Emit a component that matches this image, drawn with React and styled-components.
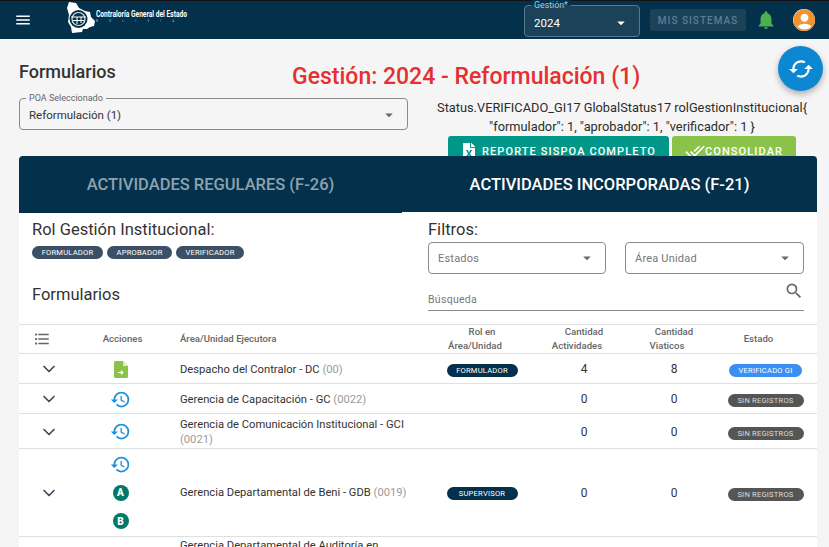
import React from "react";
import styled, { createGlobalStyle } from "styled-components";
import {
  MdMenu,
  MdNotifications,
  MdAccountCircle,
  MdArrowDropDown,
  MdSearch,
  MdDoneAll,
  MdHistory,
  MdFormatListBulleted,
  MdCached,
} from "react-icons/md";
import { FaFileExcel } from "react-icons/fa";
import { ChevronDown } from "lucide-react";

const GlobalStyle = createGlobalStyle`
  html, body {
    margin: 0;
    padding: 0;
    height: 100%;
    overflow: hidden;
    background: #f5f5f5;
    font-family: Roboto, "Liberation Sans", sans-serif;
    color: #212121;
  }
  * { box-sizing: border-box; }
`;

const Page = styled.div`
  position: relative;
  width: 829px;
  height: 547px;
  overflow: hidden;
`;

const AppBar = styled.header`
  height: 39px;
  background: #03304a;
  border-top: 1px solid #111;
  display: flex;
  align-items: center;
  padding-left: 14px;
  color: #fff;
`;

const Brand = styled.div`
  display: flex;
  align-items: center;
  margin-left: 34px;
  margin-top: -5px;
`;

const BrandText = styled.div`
  display: flex;
  flex-direction: column;
  width: 92px;
  margin-top: -2px;
`;

const BrandName = styled.span`
  font-size: 9px;
  line-height: 9px;
  font-weight: 700;
  white-space: nowrap;
  transform: scaleX(0.74);
  transform-origin: left;
`;

const BrandCountry = styled.span`
  font-size: 3px;
  line-height: 4px;
  letter-spacing: 11.2px;
  color: #a9bac4;
  white-space: nowrap;
`;

const BarRight = styled.div`
  margin-left: auto;
  display: flex;
  align-items: center;
  padding-right: 14px;
`;

const YearSelect = styled.div`
  position: relative;
  width: 116px;
  height: 32px;
  margin-top: 2px;
  background: #1b4258;
  border: 1px solid #58798c;
  border-radius: 4px;
  display: flex;
  align-items: center;
  justify-content: space-between;
  padding: 3px 9px 0 9px;
  font-size: 11.5px;
`;

const YearLabel = styled.span`
  position: absolute;
  top: -6px;
  left: 6px;
  padding: 0 3px;
  font-size: 8.8px;
  line-height: 11px;
  color: #b9c6ce;
  background: linear-gradient(#03304a 50%, #1b4258 50%);
`;

const SystemsButton = styled.button`
  width: 96px;
  height: 22px;
  margin-left: 10px;
  padding: 0;
  border: 0;
  border-radius: 2px;
  background: #1b4258;
  color: #5f7d8f;
  font: 500 10px Roboto, sans-serif;
  letter-spacing: 1px;
  white-space: nowrap;
`;

const BellWrap = styled.span`
  display: flex;
  margin-left: 9px;
  color: #4caf50;
`;

const Avatar = styled.span`
  display: flex;
  align-items: center;
  justify-content: center;
  width: 22px;
  height: 22px;
  margin-left: 16px;
  border-radius: 50%;
  overflow: hidden;
  background: #fff;
  color: #f2932f;
`;

const Fab = styled.button`
  position: absolute;
  top: 46px;
  left: 778px;
  z-index: 3;
  width: 45px;
  height: 45px;
  padding: 0;
  border: 0;
  border-radius: 50%;
  background: #0c87d2;
  color: #fff;
  display: flex;
  align-items: center;
  justify-content: center;
  box-shadow: 0 3px 6px rgba(0, 0, 0, 0.3);
`;

const TopArea = styled.section`
  height: 117px;
  padding: 22px 3px 0 19px;
  overflow: hidden;
`;

const TitleRow = styled.div`
  display: flex;
  align-items: flex-start;
  height: 37px;
`;

const PageTitle = styled.h2`
  margin: 0;
  width: 273px;
  font-size: 18px;
  line-height: 22px;
  font-weight: 500;
  color: #333;
`;

const RedTitle = styled.h1`
  margin: 2px 0 0;
  font-size: 23px;
  line-height: 28px;
  font-weight: 500;
  color: #e53030;
  white-space: nowrap;
`;

const ControlsRow = styled.div`
  display: grid;
  grid-template-columns: 389px 1fr;
  column-gap: 10px;
`;

const OutlinedSelect = styled.div`
  position: relative;
  height: 32px;
  border: 1px solid #8a8a8a;
  border-radius: 4px;
  display: flex;
  align-items: center;
  justify-content: space-between;
  padding: 2px 9px 0 9px;
  font-size: 11.5px;
  color: #333;
`;

const SelectCaption = styled.span`
  position: absolute;
  top: -6px;
  left: 6px;
  padding: 0 3px;
  background: #f5f5f5;
  font-size: 9px;
  line-height: 11px;
  color: #666;
`;

const StatusColumn = styled.div`
  display: flex;
  flex-direction: column;
  align-items: center;
  text-align: center;
`;

const DebugText = styled.p`
  margin: 0;
  font-size: 12.8px;
  line-height: 19px;
  color: #2c2c2c;
  white-space: nowrap;
`;

const ButtonRow = styled.div`
  display: flex;
  gap: 3px;
`;

const ActionButton = styled.button`
  display: flex;
  align-items: center;
  justify-content: center;
  gap: ${(p) => p.$gap}px;
  width: ${(p) => p.$w}px;
  height: 30px;
  border: 0;
  border-radius: 3px;
  padding: 0;
  background: ${(p) => p.$bg};
  color: #fff;
  font: 500 11px Roboto, sans-serif;
  letter-spacing: 1.1px;
  white-space: nowrap;
`;

const Card = styled.main`
  margin: 0 12px 0 19px;
  background: #fff;
  border-radius: 4px 4px 0 0;
  overflow: hidden;
  height: 391px;
`;

const Tabs = styled.nav`
  display: grid;
  grid-template-columns: 383px 415px;
  height: 57px;
  background: #03304a;
`;

const Tab = styled.div`
  display: flex;
  align-items: center;
  justify-content: center;
  font-size: 16.5px;
  font-weight: 500;
  color: ${(p) => (p.$active ? "#fff" : "#8ea2ae")};
  border-bottom: 1px solid ${(p) => (p.$active ? "#fff" : "transparent")};
`;

const FilterGrid = styled.section`
  display: grid;
  grid-template-columns: 409px 1fr;
  height: 112px;
  border-bottom: 1px solid #e0e0e0;
`;

const RoleColumn = styled.div`
  padding: 7px 0 0 13px;
`;

const SectionTitle = styled.h3`
  margin: 0;
  font-size: 16.5px;
  line-height: 20px;
  font-weight: 400;
  color: #333;
`;

const RoleChips = styled.div`
  display: flex;
  gap: 4px;
  margin-top: 6px;
  margin-bottom: 26px;
`;

const Chip = styled.span`
  display: inline-flex;
  align-items: center;
  justify-content: center;
  width: ${(p) => p.$w}px;
  height: 13px;
  margin-top: ${(p) => p.$drop || 0}px;
  border-radius: 7px;
  background: ${(p) => p.$bg};
  color: ${(p) => p.$fg || "#fff"};
  font-size: 7.6px;
  letter-spacing: 0.2px;
  white-space: nowrap;
`;

const FilterColumn = styled.div`
  padding: 7px 13px 0 0;
`;

const FilterSelects = styled.div`
  display: grid;
  grid-template-columns: 178px 179px;
  column-gap: 19px;
  margin-top: 2px;
`;

const FilterSelect = styled.div`
  height: 32px;
  border: 1px solid #8a8a8a;
  border-radius: 4px;
  display: flex;
  align-items: center;
  justify-content: space-between;
  padding: 0 9px 0 9px;
  font-size: 11px;
  letter-spacing: 0.2px;
  color: #777;
`;

const SearchField = styled.div`
  display: flex;
  align-items: flex-end;
  justify-content: space-between;
  height: 37px;
  border-bottom: 1px solid #8a8a8a;
  padding-bottom: 4px;
  font-size: 10.5px;
  letter-spacing: 0.3px;
  color: #777;
`;

const SearchIcon = styled(MdSearch)`
  margin-bottom: 5px;
  color: #666;
`;

const Table = styled.table`
  width: 798px;
  table-layout: fixed;
  border-collapse: collapse;
`;

const Th = styled.th`
  height: 28px;
  padding: 0;
  border-bottom: 1px solid #e0e0e0;
  font-size: 9.6px;
  line-height: 14px;
  font-weight: 500;
  color: #666;
  text-align: ${(p) => p.$align || "center"};
  padding-left: ${(p) => (p.$align === "left" ? "15px" : "0")};
`;

const ThLine = styled.span`
  display: block;
  margin-right: ${(p) => (p.$shift ? "14px" : "0")};
`;

const ListIcon = styled(MdFormatListBulleted)`
  display: block;
  margin-left: 14px;
`;

const Td = styled.td`
  height: ${(p) => p.$h}px;
  padding: 1px 0 0;
  border-bottom: 1px solid #e0e0e0;
  text-align: center;
  font-size: 12px;
  vertical-align: middle;
  color: #333;
`;

const NameCell = styled(Td)`
  text-align: left;
  padding-left: 15px;
  padding-right: 12px;
  line-height: 15px;
  font-size: 11.2px;
`;

const Code = styled.span`
  color: #9a9a9a;
`;

const Chevron = styled(ChevronDown)`
  display: block;
  margin-left: 20px;
  color: #39495c;
`;

const ActionIcons = styled.div`
  display: flex;
  flex-direction: column;
  align-items: center;
  margin-right: 4px;
  padding-bottom: ${(p) => p.$pad || 0}px;
  color: #1c8fdc;
`;

const ActionSlot = styled.div`
  display: flex;
  align-items: center;
  justify-content: center;
  height: ${(p) => (p.$tall ? "28.6px" : "auto")};
`;

const LetterBadge = styled.span`
  display: flex;
  align-items: center;
  justify-content: center;
  width: 16px;
  height: 16px;
  border-radius: 50%;
  background: #00796b;
  color: #fff;
  font-size: 10px;
  font-weight: 900;
`;

const FileArrowIcon = () => (
  <svg width="14" height="17" viewBox="0 0 14 17">
    <path d="M1.5 0H9l5 5v10.5a1.5 1.5 0 0 1-1.5 1.5h-11A1.5 1.5 0 0 1 0 15.5V1.5A1.5 1.5 0 0 1 1.5 0z" fill="#8bc34a" />
    <path d="M9 0l5 5H9z" fill="#dcedc8" />
    <path d="M4 11.5h4.5M7 9.800l1.800 1.700L7 13.200" fill="none" stroke="#fff" strokeWidth="1.2" />
  </svg>
);

const BrandLogo = () => (
  <svg width="30" height="32" viewBox="0 0 30 32">
    <path d="M3 0l7 1 3 5 6 3 5 1 1 5 4 4-1 5-4 1-3 2h-4l-1 3-10 1-1-6-3-5 1-7-2-7z" fill="#fff" />
    <circle cx="12.5" cy="17" r="9" fill="#03304a" />
    <circle cx="12.500" cy="17" r="6.500" fill="none" stroke="#dfe6ea" strokeWidth="1.2" />
    <path d="M5 15h15M7 18.500h11M11 15v7M15 15v6" stroke="#fff" strokeWidth="1" />
  </svg>
);

const rows = [
  { name: "Despacho del Contralor - DC", code: "(00)", h: 30, rol: "FORMULADOR", act: 4, via: 8, verified: true, icon: "file" },
  { name: "Gerencia de Capacitación - GC", code: "(0022)", h: 30, act: 0, via: 0 },
  { name: "Gerencia de Comunicación Institucional - GCI", code: "(0021)", h: 35, act: 0, via: 0 },
  { name: "Gerencia Departamental de Beni - GDB", code: "(0019)", h: 87, rol: "SUPERVISOR", act: 0, via: 0, letters: true },
  { name: "Gerencia Departamental de Auditoría en Empresas Públicas y Entidades Territoriales", code: "(0020)", h: 45, pad: 5 },
];

const App = () => (
  <Page>
    <GlobalStyle />
    <AppBar>
      <MdMenu size={18} />
      <Brand>
        <BrandLogo />
        <BrandText>
          <BrandName>Contraloría General del Estado</BrandName>
          <BrandCountry>BOLIVIA</BrandCountry>
        </BrandText>
      </Brand>
      <BarRight>
        <YearSelect>
          <YearLabel>Gestión*</YearLabel>
          2024
          <MdArrowDropDown size={18} />
        </YearSelect>
        <SystemsButton>MIS SISTEMAS</SystemsButton>
        <BellWrap>
          <MdNotifications size={22} />
        </BellWrap>
        <Avatar>
          <MdAccountCircle size={27} style={{ flexShrink: 0 }} />
        </Avatar>
      </BarRight>
    </AppBar>

    <Fab>
      <MdCached size={26} />
    </Fab>

    <TopArea>
      <TitleRow>
        <PageTitle>Formularios</PageTitle>
        <RedTitle>Gestión: 2024 - Reformulación (1)</RedTitle>
      </TitleRow>
      <ControlsRow>
        <OutlinedSelect>
          <SelectCaption>POA Seleccionado</SelectCaption>
          Reformulación (1)
          <MdArrowDropDown size={18} color="#666" />
        </OutlinedSelect>
        <StatusColumn>
          <DebugText>
            Status.VERIFICADO_GI17 GlobalStatus17 rolGestionInstitucional{"{"}
            <br />
            "formulador": 1, "aprobador": 1, "verificador": 1 {"}"}
          </DebugText>
          <ButtonRow>
            <ActionButton $w={221} $bg="#009688" $gap={5}>
              <FaFileExcel size={16} />
              REPORTE SISPOA COMPLETO
            </ActionButton>
            <ActionButton $w={124} $bg="#8bc34a" $gap={0}>
              <MdDoneAll size={20} />
              CONSOLIDAR
            </ActionButton>
          </ButtonRow>
        </StatusColumn>
      </ControlsRow>
    </TopArea>

    <Card>
      <Tabs>
        <Tab>ACTIVIDADES REGULARES (F-26)</Tab>
        <Tab $active>ACTIVIDADES INCORPORADAS (F-21)</Tab>
      </Tabs>
      <FilterGrid>
        <RoleColumn>
          <SectionTitle>Rol Gestión Institucional:</SectionTitle>
          <RoleChips>
            <Chip $w={71} $bg="#3c4f66">FORMULADOR</Chip>
            <Chip $w={65} $bg="#3c4f66">APROBADOR</Chip>
            <Chip $w={68} $bg="#3c4f66">VERIFICADOR</Chip>
          </RoleChips>
          <SectionTitle>Formularios</SectionTitle>
        </RoleColumn>
        <FilterColumn>
          <SectionTitle>Filtros:</SectionTitle>
          <FilterSelects>
            <FilterSelect>
              Estados
              <MdArrowDropDown size={18} color="#666" />
            </FilterSelect>
            <FilterSelect>
              Área Unidad
              <MdArrowDropDown size={18} color="#666" />
            </FilterSelect>
          </FilterSelects>
          <SearchField>
            Búsqueda
            <SearchIcon size={20} />
          </SearchField>
        </FilterColumn>
      </FilterGrid>
      <Table>
        <colgroup>
          <col width="61" />
          <col width="85" />
          <col width="265" />
          <col width="104" />
          <col width="100" />
          <col width="80" />
          <col width="103" />
        </colgroup>
        <thead>
          <tr>
            <Th>
              <ListIcon size={18} />
            </Th>
            <Th>Acciones</Th>
            <Th $align="left">Área/Unidad Ejecutora</Th>
            <Th>
              Rol en
              <ThLine $shift>Área/Unidad</ThLine>
            </Th>
            <Th>
              Cantidad
              <ThLine $shift>Actividades</ThLine>
            </Th>
            <Th>
              Cantidad
              <ThLine $shift>Viaticos</ThLine>
            </Th>
            <Th>
              <ThLine $shift>Estado</ThLine>
            </Th>
          </tr>
        </thead>
        <tbody>
          {rows.map((r) => (
            <tr key={r.name}>
              <Td $h={r.h}>
                <Chevron size={20} />
              </Td>
              <Td $h={r.h}>
                <ActionIcons $pad={r.pad}>
                  <ActionSlot $tall={r.letters}>
                    {r.icon === "file" ? <FileArrowIcon /> : <MdHistory size={21} />}
                  </ActionSlot>
                  {r.letters && (
                    <ActionSlot $tall>
                      <LetterBadge>A</LetterBadge>
                    </ActionSlot>
                  )}
                  {r.letters && (
                    <ActionSlot $tall>
                      <LetterBadge>B</LetterBadge>
                    </ActionSlot>
                  )}
                </ActionIcons>
              </Td>
              <NameCell $h={r.h}>
                {r.name} <Code>{r.code}</Code>
              </NameCell>
              <Td $h={r.h}>
                {r.rol && <Chip $w={71} $bg="#03304a">{r.rol}</Chip>}
              </Td>
              <Td $h={r.h}>{r.act}</Td>
              <Td $h={r.h}>{r.via}</Td>
              <Td $h={r.h}>
                {r.verified && <Chip $w={73} $bg="#3b8ff0" $drop={3}>VERIFICADO GI</Chip>}
                {!r.verified && r.act !== undefined && <Chip $w={76} $bg="#555" $fg="#ddd" $drop={3}>SIN REGISTROS</Chip>}
              </Td>
            </tr>
          ))}
        </tbody>
      </Table>
    </Card>
  </Page>
);

export default App;
